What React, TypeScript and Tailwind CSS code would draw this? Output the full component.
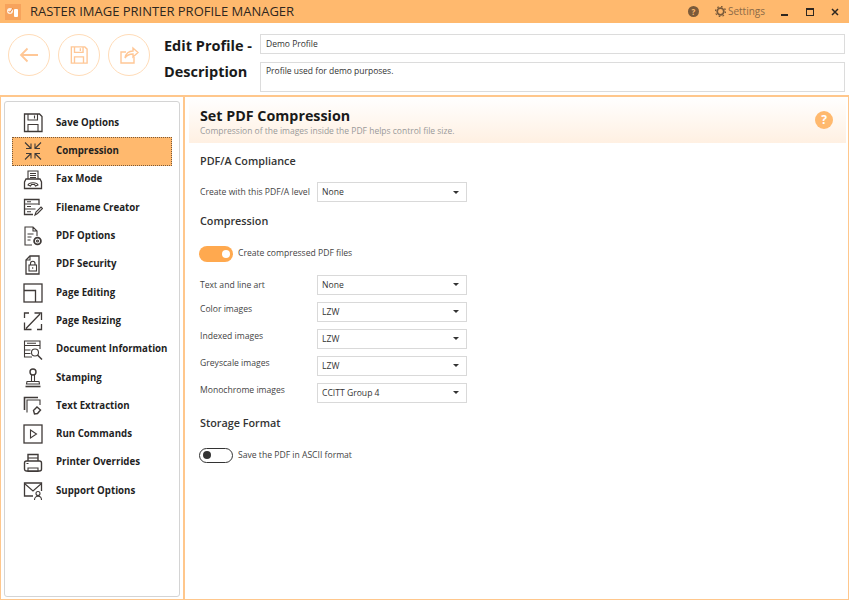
import type { ReactNode } from "react";

const font = { fontFamily: '"Open Sans", "Noto Sans", sans-serif' };

const Ico = ({ children, s = 20 }: { children: ReactNode; s?: number }) => (
  <svg width={s} height={s} viewBox="0 0 20 20" fill="none" stroke="#3f3a38" strokeWidth="1.1">
    {children}
  </svg>
);

const navItems: { label: string; icon: ReactNode }[] = [
  {
    label: "Save Options",
    icon: (
      <Ico>
        <path d="M1.500 1h15l2.500 2.500V18.500H1.500z" strokeWidth="1.300" />
        <path d="M5 1v6h9.500V1M11.500 2.500v3M5 18.500v-7h10v7" />
      </Ico>
    ),
  },
  {
    label: "Compression",
    icon: (
      <Ico>
        <path d="M2 1.500l6 6M3 7.500h5v-5M18 1.500l-6 6M12 2.500v5h5M2 18.500l6-6M3 12.500h5v5M18 18.500l-6-6M12 17.500v-5h5" />
      </Ico>
    ),
  },
  {
    label: "Fax Mode",
    icon: (
      <Ico>
        <path d="M5 9V1h10v8M7 3.500h6M7 5.500h6M7 7.500h6" />
        <path d="M3 9h14l1.500 3v6.500h-17V12z" strokeWidth="1.300" />
        <path d="M5 15c1-3 9-3 10 0l-2.500 1-1-1.500h-3l-1 1.500z" />
      </Ico>
    ),
  },
  {
    label: "Filename Creator",
    icon: (
      <Ico>
        <path d="M16 7V1.500H1.500v15H10" strokeWidth="1.300" />
        <path d="M1.500 6h14M1.500 11h11M4 3.700h4M4 8.500h4M4 13.700h4" />
        <path d="M12 17l1-3 5-5 1.500 1.500-5 5z" />
      </Ico>
    ),
  },
  {
    label: "PDF Options",
    icon: (
      <Ico>
        <path d="M9 19H2V1h8l4 4v5M10 1v4h4M4.500 8h6M4.500 11h4M4.500 14h3" />
        <circle cx="14.500" cy="15" r="3.400" strokeWidth="1.800" />
        <circle cx="14.500" cy="15" r="1" />
      </Ico>
    ),
  },
  {
    label: "PDF Security",
    icon: (
      <Ico>
        <path d="M7 1h9v18H3V5z" strokeWidth="1.300" />
        <path d="M7 1v4H3" />
        <rect x="6" y="10" width="7.500" height="6" />
        <path d="M7.500 10V8.500a2.200 2.200 0 0 1 4.500 0V10M9.700 12.300v1.500" />
      </Ico>
    ),
  },
  {
    label: "Page Editing",
    icon: (
      <Ico>
        <rect x="1" y="1" width="18" height="18" strokeWidth="1.300" />
        <path d="M1 7.500h11.500V19" strokeWidth="1.300" />
      </Ico>
    ),
  },
  {
    label: "Page Resizing",
    icon: (
      <Ico>
        <path d="M1.500 7V2H6M14 18.500h4.500V13M3 17.500L17 3M11.500 2h7v7M1.500 11.500v7h7" strokeWidth="1.300" />
      </Ico>
    ),
  },
  {
    label: "Document Information",
    icon: (
      <Ico>
        <path d="M9 17H1.500V1H17v8M1.500 5.500H17M1.500 10h6M1.500 13.500h6M4 3.300h9" />
        <circle cx="12" cy="12.500" r="3.500" />
        <path d="M14.500 15l4.500 4.500" strokeWidth="1.500" />
      </Ico>
    ),
  },
  {
    label: "Stamping",
    icon: (
      <Ico>
        <circle cx="10" cy="4" r="3" strokeWidth="1.400" />
        <path d="M8.500 7v6M11.500 7v6M4 13.500h12l.5 2.500H3.500z" />
        <path d="M2.500 18.500h15" strokeWidth="1.600" />
      </Ico>
    ),
  },
  {
    label: "Text Extraction",
    icon: (
      <Ico>
        <path d="M1.500 14V1.500H15" strokeWidth="1.600" />
        <path d="M4 16.500V4h13v5" />
        <path d="M10.500 14.500l3.500-3.500 3.500 3-3 3.500-3 .5z" strokeWidth="1.400" />
      </Ico>
    ),
  },
  {
    label: "Run Commands",
    icon: (
      <Ico>
        <rect x="1" y="1" width="18" height="18" strokeWidth="1.300" />
        <path d="M7.500 6l6 4-6 4z" />
      </Ico>
    ),
  },
  {
    label: "Printer Overrides",
    icon: (
      <Ico>
        <path d="M5 8V1.500h10V8" strokeWidth="1.400" />
        <path d="M5 5h10" />
        <rect x="1.500" y="8" width="17" height="10" rx="2" strokeWidth="1.400" />
        <path d="M5 15h10v3.500H5zM3.500 10.500h2" />
      </Ico>
    ),
  },
  {
    label: "Support Options",
    icon: (
      <Ico>
        <path d="M10 15H1.500V2h17v8" strokeWidth="1.300" />
        <path d="M1.500 2.500L10 10l8.500-7.500" />
        <circle cx="15" cy="12.500" r="2" />
        <path d="M11.500 19c0-5 7-5 7 0" />
      </Ico>
    ),
  },
];

const Select = ({ value }: { value: string }) => (
  <div className="flex h-[20px] w-[150px] items-center justify-between border border-[#d9d9d9] bg-white pl-[4px] pr-[7px] text-[8.600px] text-[#333]">
    <span className="pt-[1px]">{value}</span>
    <span className="h-0 w-0 border-x-[3px] border-t-[3px] border-x-transparent border-t-[#333]" />
  </div>
);

const rows = [
  { label: "Text and line art", value: "None", mt: "pt-[1px]" },
  { label: "Color images", value: "LZW", mt: "-mt-[5px]" },
  { label: "Indexed images", value: "LZW", mt: "-mt-[5px]" },
  { label: "Greyscale images", value: "LZW", mt: "-mt-[5px]" },
  { label: "Monochrome images", value: "CCITT Group 4", mt: "-mt-[5px]" },
];

const CircleBtn = ({ children }: { children: ReactNode }) => (
  <div className="flex h-[42px] w-[42px] items-center justify-center rounded-full border-[1.5px] border-[#ffdcb8]">
    {children}
  </div>
);

export default function App() {
  return (
    <div className="flex h-[600px] w-[849px] flex-col overflow-hidden bg-white" style={font}>
      {/* title bar */}
      <div className="flex h-[23px] shrink-0 items-center bg-[#ffb96e] pl-[5px] pr-[10px]">
        <div className="flex h-[16px] w-[16px] items-center justify-center bg-[#f7a35c]">
          <svg width="14" height="12" viewBox="0 0 14 12">
            <circle cx="4" cy="5" r="3" fill="#fff" opacity="0.85" />
            <rect x="8" y="3" width="4" height="8" rx="1" fill="#fff" />
            <path d="M2.500 5l1.500 1.500L7 2" stroke="#e8833a" strokeWidth="1" fill="none" />
          </svg>
        </div>
        <span className="ml-[9px] whitespace-nowrap text-[13px] text-[#2e2720]">
          RASTER IMAGE PRINTER PROFILE MANAGER
        </span>
        <div className="ml-auto flex items-center">
          <span className="flex h-[11px] w-[11px] items-center justify-center rounded-full bg-[#7a5a3a] text-[8px] font-bold text-[#ffb96e]">
            ?
          </span>
          <svg className="ml-[16px]" width="11" height="11" viewBox="0 0 11 11">
            <circle cx="5.500" cy="5.500" r="3.300" fill="none" stroke="#7a5a3a" strokeWidth="1.700" />
            <circle cx="5.500" cy="5.500" r="5" fill="none" stroke="#7a5a3a" strokeWidth="1.300" strokeDasharray="1.600 2.320" />
          </svg>
          <span className="ml-[2px] text-[10px] text-[#8c6a47]">Settings</span>
          <span className="ml-[16px] mt-[6px] h-[2px] w-[7px] bg-[#2e2720]" />
          <span className="ml-[18px] h-[8px] w-[8px] border border-t-2 border-[#2e2720]" />
          <svg className="ml-[17px]" width="8" height="8" viewBox="0 0 8 8">
            <path d="M1 1l6 6M7 1L1 7" stroke="#2e2720" strokeWidth="1.500" />
          </svg>
        </div>
      </div>

      {/* profile header */}
      <div className="flex h-[74px] shrink-0 items-start border-b-2 border-[#ffc78c] pl-[8px] pr-[4px]">
        <div className="mt-[11px] flex gap-[8px]">
          <CircleBtn>
            <svg width="20" height="16" viewBox="0 0 20 16" fill="none" stroke="#ffc796" strokeWidth="1.800">
              <path d="M19 8H2M8.500 1.500L2 8l6.500 6.500" />
            </svg>
          </CircleBtn>
          <CircleBtn>
            <svg width="18" height="18" viewBox="0 0 20 20" fill="none" stroke="#ffc796" strokeWidth="1.500">
              <path d="M1.500 1h15l2.500 2.500V19H1.500z" />
              <path d="M5 1v6h9.500V1M11.500 2.500v3M5 19v-7h10v7" />
            </svg>
          </CircleBtn>
          <CircleBtn>
            <svg width="20" height="18" viewBox="0 0 20 18" fill="none" stroke="#ffc796" strokeWidth="1.400">
              <path d="M15 11v6H2V6h5" />
              <path d="M6 12c1-5 4-7 8-7V2l5 4.500L14 11V8c-3 0-6 1-8 4z" />
            </svg>
          </CircleBtn>
        </div>
        <div className="ml-[14px] mt-[12px] flex w-[90px] flex-col gap-[4px] text-[14.500px] leading-[22px] font-bold whitespace-nowrap text-[#1a1a1a]">
          <span>Edit Profile -</span>
          <span>Description</span>
        </div>
        <div className="ml-[6px] mt-[11px] flex flex-1 flex-col gap-[8px] text-[8.500px] text-[#333]">
          <div className="flex h-[20px] items-center border border-[#dcdcdc] pl-[5px]">Demo Profile</div>
          <div className="h-[30px] border border-[#dcdcdc] pl-[5px] pt-[2px]">Profile used for demo purposes.</div>
        </div>
      </div>

      {/* body */}
      <div className="flex min-h-0 flex-1 border-x border-b border-[#ffc78c]">
        <aside className="w-[184px] shrink-0 border-r-2 border-[#ffc78c] pb-[2px] pl-[3px] pr-[3px] pt-[4px]">
          <div className="h-full rounded-[3px] border border-[#d4d4d4] pl-[7px] pr-[7px] pt-[7px]">
            {navItems.map((item) => (
              <div
                key={item.label}
                className={`flex h-[28.300px] items-center border border-dotted pl-[10px] ${
                  item.label === "Compression" ? "border-[#7a5a3a] bg-[#ffb96e]" : "border-transparent"
                }`}
              >
                <span className="flex w-[33px] shrink-0 items-center">{item.icon}</span>
                <span className="whitespace-nowrap text-[9.700px] font-bold text-[#1f1f1f]">{item.label}</span>
              </div>
            ))}
          </div>
        </aside>

        <main className="min-w-0 flex-1 pl-[15px] pr-[2px]">
          <div className="-ml-[11px] flex h-[46px] items-center justify-between bg-gradient-to-b from-white to-[#fff0e2] pl-[11px] pr-[13px]">
            <div className="flex flex-col pt-[2px]">
              <span className="text-[14.300px] leading-[18px] font-bold text-[#1a1a1a]">Set PDF Compression</span>
              <span className="text-[8.500px] leading-[11px] text-[#9a9a9a]">
                Compression of the images inside the PDF helps control file size.
              </span>
            </div>
            <span className="flex h-[18px] w-[18px] items-center justify-center rounded-full bg-[#ffb96e] text-[12px] font-bold text-white">
              ?
            </span>
          </div>

          <h3 className="mt-[10px] text-[10.800px] leading-[15px] font-semibold text-[#333]">PDF/A Compliance</h3>
          <div className="mt-[14px] flex items-center">
            <span className="w-[117px] whitespace-nowrap pt-[1px] text-[8.600px] text-[#444]">Create with this PDF/A level</span>
            <Select value="None" />
          </div>

          <h3 className="mt-[11px] text-[10.800px] leading-[15px] font-semibold text-[#333]">Compression</h3>
          <div className="mt-[17.500px] flex items-center">
            <span className="-ml-[1px] flex h-[16px] w-[34px] items-center justify-end rounded-full bg-[#ffa94f] pr-[3px]">
              <span className="h-[8px] w-[8px] rounded-full bg-white" />
            </span>
            <span className="ml-[5px] text-[8.600px] text-[#444]">Create compressed PDF files</span>
          </div>

          <div className="mt-[13px] flex flex-col gap-[7px]">
            {rows.map((row) => (
              <div key={row.label} className="flex items-center">
                <span className={`w-[117px] whitespace-nowrap text-[8.600px] text-[#444] ${row.mt}`}>{row.label}</span>
                <Select value={row.value} />
              </div>
            ))}
          </div>

          <h3 className="mt-[12px] text-[10.800px] leading-[15px] font-semibold text-[#333]">Storage Format</h3>
          <div className="mt-[18px] flex items-center">
            <span className="-ml-[1px] flex h-[15px] w-[34px] items-center rounded-full border-[1.500px] border-[#333] pl-[3px]">
              <span className="h-[8px] w-[8px] rounded-full bg-[#333]" />
            </span>
            <span className="ml-[5px] text-[8.600px] text-[#444]">Save the PDF in ASCII format</span>
          </div>
        </main>
      </div>
    </div>
  );
}
